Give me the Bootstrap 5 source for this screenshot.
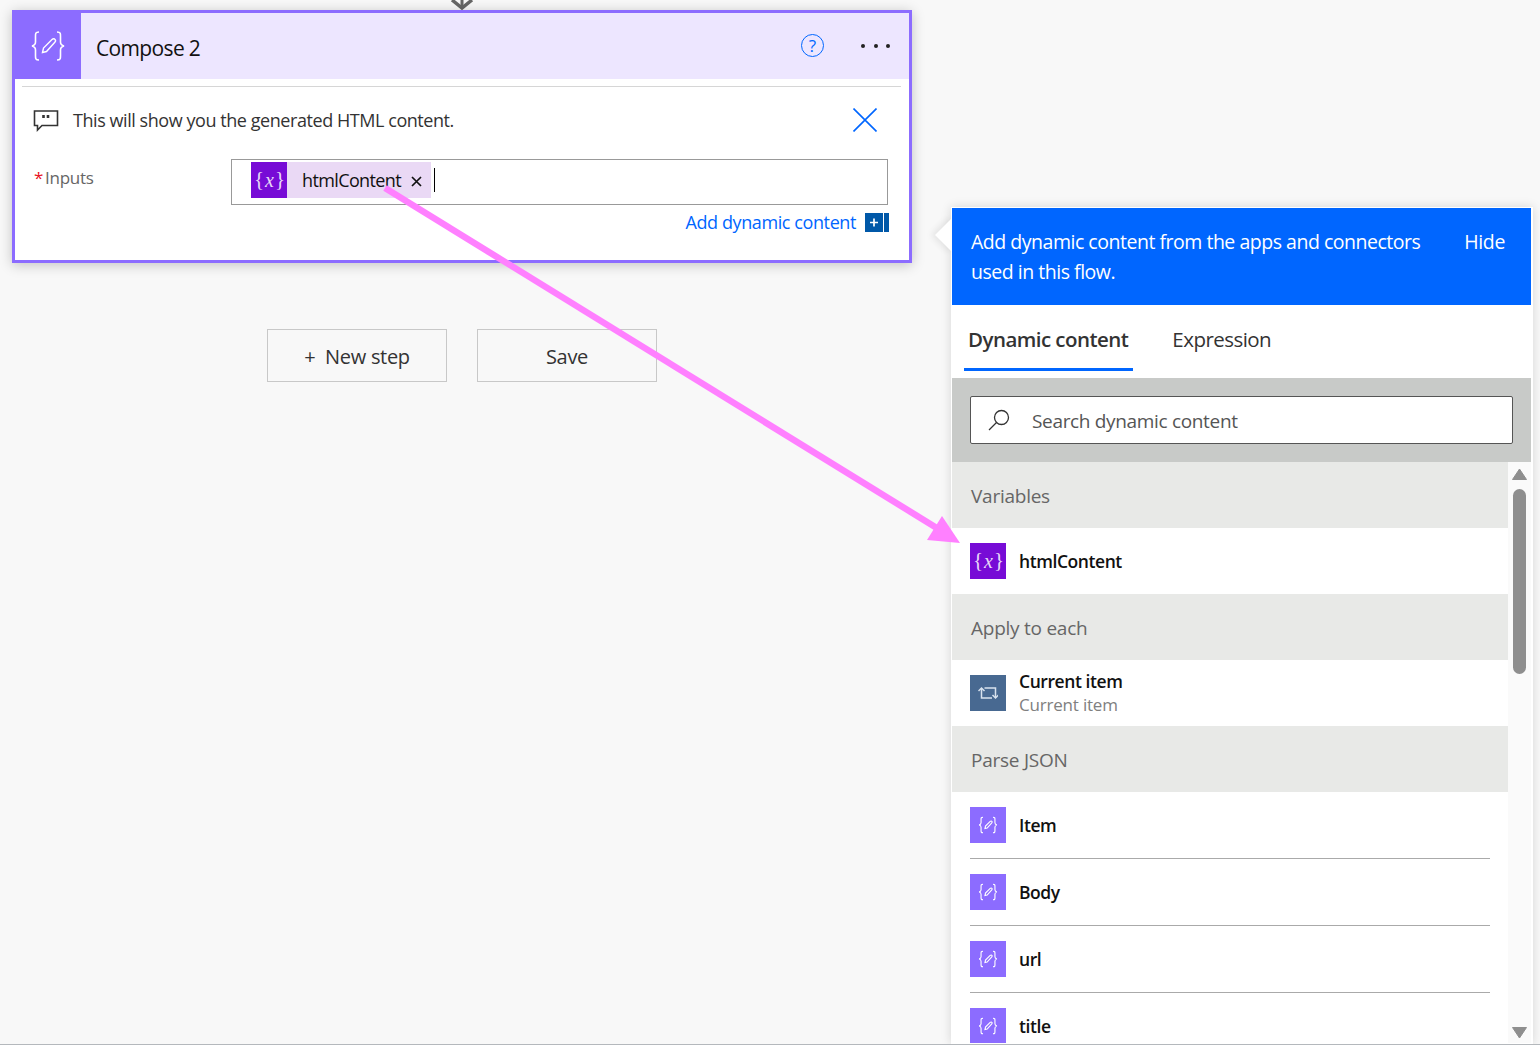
<!DOCTYPE html>
<html lang="en"><head><meta charset="utf-8"><title>Compose 2</title>
<link href="https://cdn.jsdelivr.net/npm/bootstrap@5.3.0/dist/css/bootstrap.min.css" rel="stylesheet">
<style>
html,body{height:1045px;overflow:hidden}
body{font-family:"Open Sans","Liberation Sans",sans-serif;background:#f8f8f8;color:#222;border-bottom:1px solid #b4b8bc;position:relative;font-size:18px;letter-spacing:-.44px}
.flow-col{width:951px;flex:none}
.connector{height:10px;width:924px}
.connector svg{display:block}
.action{width:900px;height:253px;margin-left:12px;border:3px solid #8c6cff;border-radius:0;box-shadow:0 2px 12px rgba(0,0,0,.22);background:#fff}
.action-head{height:66px;background:#ede6ff}
.action-icon{width:66px;height:66px;background:#8c6cff;flex:none}
.action-title{font-size:21px;margin-left:15px;padding-top:5px;color:#111;letter-spacing:-.65px}
.help{width:23px;height:23px;margin-right:37px;margin-bottom:2px;border:1.5px solid #0066ff;border-radius:50%;color:#0066ff;font-size:17px;line-height:1;letter-spacing:0}
.dots{gap:8.500px;margin-right:19px}
.dots i{display:block;width:4px;height:4px;border-radius:50%;background:#222}
.rule{height:1px;margin:7px 8px 0 7px;background:#d6d6d6}
.comment{padding:15px 32px 0 18px;height:72px}
.comment-text{margin-left:14px;padding-top:6px;line-height:24px;color:#333}
.comment svg.c{margin-top:6px;flex:none}
.close-x{margin-top:6px}
.field{padding-left:19px;padding-right:21px}
.field-label{width:197px;padding-top:6px;color:#666;font-size:17px;letter-spacing:-.3px}
.field-label b{color:#e81123;font-weight:400;margin-right:2px}
.token-box{height:46px;width:657px;padding:2px 0 0 19px;border:1px solid #999;border-radius:0;background:#fff}
.chip{height:36px;width:180px;background:#ead9f5;color:#111}
.chip-icon,.var-icon{background:#770bd6;color:#e8d8f8;width:36px;height:36px;font-family:"Liberation Serif",serif;font-size:21px;letter-spacing:-1px;flex:none}
.chip-icon em,.var-icon em{margin:0 2px;font-size:20px}
.chip-name{margin-left:15px;font-size:18px;letter-spacing:-.62px}
.chip-x{margin-left:10px;margin-top:3px}
.caret-bar{display:block;width:1px;height:24px;background:#000;margin:6px 0 0 3px}
.add-link{color:#0066ff;text-decoration:none;font-size:18px;line-height:22px;padding:6px 20px 0 0;letter-spacing:-.4px}
.add-link svg{margin-left:9px}
.steps{margin-top:66px;margin-left:267px;gap:30px}
.steps .btn{width:180px;height:53px;border:1px solid #c8c8c8;border-radius:0;background:#f8f8f8;color:#333;font-size:20px;letter-spacing:-.3px;padding:2px 0 0}
.panel{width:582px;height:837px;margin-top:207px;border:1px solid #fff;border-right-width:2px;border-radius:0;background:#fff;box-shadow:0 0 10px rgba(0,0,0,.14);position:relative;flex:none}
.pointer{position:absolute;left:-12px;top:15px;width:24px;height:24px;background:#fff;transform:rotate(45deg);box-shadow:-3px 3px 6px rgba(0,0,0,.08)}
.panel-head{height:97px;padding:19px 26px 0 19px;background:#0066ff;color:#fff;position:relative;font-size:19.500px;line-height:30px;letter-spacing:-.48px}
.panel-head p{width:470px;margin:0}
.panel-head a{color:#fff;text-decoration:none;letter-spacing:-.38px}
.tabs{height:73px;padding-left:12px;gap:35px;border:0}
.tabs .nav-link{height:66px;padding:19px 5px 0 4px;border:0;border-radius:0;margin:0;background:none;color:#333;font-size:20.500px;letter-spacing:-.54px;border-bottom:3px solid transparent}
.tabs .nav-link.active{font-weight:600;color:#333;background:none;border-bottom:3px solid #0066ff}
.search{height:84px;padding:18px 18px 0;background:#c8cac8}
.search-box{height:48px;border:1px solid #555;border-radius:2px;background:#fff;padding-left:17px;gap:22px;color:#555;font-size:19px;letter-spacing:-.33px}
.search-box span{padding-top:2px}
.results{height:582px;overflow:hidden}
.results-list{width:556px;flex:none}
.group{height:66px;padding:4px 0 0 19px;background:#e8e9e7;color:#666;font-size:19px;letter-spacing:-.25px}
.entry{height:66px;padding:0 0 0 18px;border:0;border-radius:0;background:#fff;gap:13px}
.entry-name{font-size:17.500px;font-weight:600;color:#111;line-height:24px;letter-spacing:-.43px}
.entry-sub{font-size:17px;color:#808080;line-height:24px;letter-spacing:-.2px}
.list-row{height:67px;padding-left:18px;background:#fff}
.list-row>div{height:67px;width:520px;border-bottom:1px solid #aaa;gap:13px}
.param-icon{width:36px;height:36px;background:#8c6cff;flex:none}
.repeat-icon{width:36px;height:36px;background:#486991;flex:none}
.scroll-track{width:24px;background:#fafafa;padding-top:6px;padding-left:4px}
.scroll-thumb{width:13px;height:185px;margin:9px 0 0 1px;background:#8e8e8e;border-radius:7px}
.scroll-down{margin-top:auto;margin-bottom:4px}
.arrow{position:absolute;left:0;top:0;pointer-events:none}
</style></head>
<body>
<main class="d-flex">
<section class="flow-col">
  <div class="connector d-flex justify-content-center">
    <svg width="24" height="10" viewBox="0 0 24 10"><path d="M2 0 L12 8 L22 0" fill="none" stroke="#666" stroke-width="3.5"/><path d="M12 0V7" stroke="#666" stroke-width="3"/></svg>
  </div>
  <div class="card action">
    <div class="action-head d-flex align-items-center">
      <div class="action-icon d-flex align-items-center justify-content-center">
        <svg width="36" height="32" viewBox="0 0 36 32" fill="none" stroke="#fff" stroke-width="1.6"><path d="M9 2C5 2 5.500 4 5.500 8V12C5.500 14.500 4 15.500 2 16C4 16.500 5.500 17.500 5.500 20V24C5.500 28 5 30 9 30"/><path d="M27 2C31 2 30.500 4 30.500 8V12C30.500 14.500 32 15.500 34 16C32 16.500 30.500 17.500 30.500 20V24C30.500 28 31 30 27 30"/><path d="M12.500 22.500L13.500 18L22 9.500C23 8.500 24.500 8.500 25 9.500C25.800 10.300 25.500 11.500 24.800 12.200L16.500 21.500Z" stroke-width="1.4"/></svg>
      </div>
      <div class="action-title flex-grow-1">Compose 2</div>
      <span class="help d-flex align-items-center justify-content-center">?</span>
      <span class="dots d-flex"><i></i><i></i><i></i></span>
    </div>
    <div class="rule"></div>
    <div class="comment d-flex align-items-start">
      <svg class="c" width="26" height="24" viewBox="0 0 26 24" fill="none" stroke="#333" stroke-width="1.6"><path d="M1.500 3H24.500V17.500H9L4.500 22V17.500H1.500Z"/><path d="M10.500 7V10M15 7V10" stroke-width="2.600"/></svg>
      <div class="comment-text flex-grow-1">This will show you the generated HTML content.</div>
      <svg class="close-x" width="24" height="24" viewBox="0 0 24 24" stroke="#0066ff" stroke-width="1.6"><path d="M.5 .5L23.500 23.500M23.500 .5L.5 23.500"/></svg>
    </div>
    <div class="field d-flex">
      <label class="field-label"><b>*</b>Inputs</label>
      <div class="form-control token-box d-flex">
        <span class="chip d-flex align-items-center">
          <span class="chip-icon d-flex align-items-center justify-content-center">{<em>x</em>}</span>
          <span class="chip-name">htmlContent</span>
          <svg class="chip-x" width="11" height="11" viewBox="0 0 11 11" stroke="#111" stroke-width="1.7"><path d="M1 1L10 10M10 1L1 10"/></svg>
        </span>
        <span class="caret-bar"></span>
      </div>
    </div>
    <div class="d-flex justify-content-end">
      <a class="add-link d-flex align-items-center" href="#">Add dynamic content<svg width="24" height="19" viewBox="0 0 24 19"><rect width="18" height="19" fill="#0058a8"/><rect x="19" width="5" height="19" fill="#0058a8"/><path d="M5 9.500H13M9 5.500V13.500" stroke="#fff" stroke-width="1.700"/></svg></a>
    </div>
  </div>
  <div class="steps d-flex">
    <button class="btn" type="button">+&nbsp; New step</button>
    <button class="btn" type="button">Save</button>
  </div>
</section>
<aside class="card panel">
  <span class="pointer"></span>
  <div class="panel-head d-flex justify-content-between">
    <p>Add dynamic content from the apps and connectors used in this flow.</p>
    <a href="#">Hide</a>
  </div>
  <ul class="nav nav-tabs tabs">
    <li class="nav-item"><a class="nav-link active" href="#">Dynamic content</a></li>
    <li class="nav-item"><a class="nav-link" href="#">Expression</a></li>
  </ul>
  <div class="search">
    <div class="search-box d-flex align-items-center">
      <svg width="22" height="22" viewBox="0 0 22 22" fill="none" stroke="#333" stroke-width="1.300"><circle cx="13.500" cy="8.500" r="7"/><path d="M8.500 13.500L1 21"/></svg>
      <span>Search dynamic content</span>
    </div>
  </div>
  <div class="results d-flex">
    <div class="results-list">
      <div class="group d-flex align-items-center">Variables</div>
      <div class="list-group-item entry d-flex align-items-center">
        <span class="var-icon d-flex align-items-center justify-content-center">{<em>x</em>}</span>
        <span class="entry-name">htmlContent</span>
      </div>
      <div class="group d-flex align-items-center">Apply to each</div>
      <div class="list-group-item entry d-flex align-items-center">
        <span class="repeat-icon d-flex align-items-center justify-content-center">
          <svg width="20" height="16" viewBox="0 0 20 16" fill="none" stroke="#d8e2ee" stroke-width="1.500"><path d="M3.500 4V13H14M6.500 3H17.500V12"/><path d="M.5 6L3.500 3L6.500 6M14.500 10L17.500 13L20.500 10"/></svg>
        </span>
        <div><div class="entry-name">Current item</div><div class="entry-sub">Current item</div></div>
      </div>
      <div class="group d-flex align-items-center">Parse JSON</div>
      <div class="list-row"><div class="d-flex align-items-center"><span class="param-icon d-flex align-items-center justify-content-center"><svg width="20" height="20" viewBox="0 0 36 32" fill="none" stroke="#fff" stroke-width="2"><path d="M9 2C5 2 5.500 4 5.500 8V12C5.500 14.500 4 15.500 2 16C4 16.500 5.500 17.500 5.500 20V24C5.500 28 5 30 9 30"/><path d="M27 2C31 2 30.500 4 30.500 8V12C30.500 14.500 32 15.500 34 16C32 16.500 30.500 17.500 30.500 20V24C30.500 28 31 30 27 30"/><path d="M12.500 22.500L13.500 18L22 9.500C23 8.500 24.500 8.500 25 9.500C25.800 10.300 25.500 11.500 24.800 12.200L16.500 21.500Z"/></svg></span><span class="entry-name">Item</span></div></div>
      <div class="list-row"><div class="d-flex align-items-center"><span class="param-icon d-flex align-items-center justify-content-center"><svg width="20" height="20" viewBox="0 0 36 32" fill="none" stroke="#fff" stroke-width="2"><path d="M9 2C5 2 5.500 4 5.500 8V12C5.500 14.500 4 15.500 2 16C4 16.500 5.500 17.500 5.500 20V24C5.500 28 5 30 9 30"/><path d="M27 2C31 2 30.500 4 30.500 8V12C30.500 14.500 32 15.500 34 16C32 16.500 30.500 17.500 30.500 20V24C30.500 28 31 30 27 30"/><path d="M12.500 22.500L13.500 18L22 9.500C23 8.500 24.500 8.500 25 9.500C25.800 10.300 25.500 11.500 24.800 12.200L16.500 21.500Z"/></svg></span><span class="entry-name">Body</span></div></div>
      <div class="list-row"><div class="d-flex align-items-center"><span class="param-icon d-flex align-items-center justify-content-center"><svg width="20" height="20" viewBox="0 0 36 32" fill="none" stroke="#fff" stroke-width="2"><path d="M9 2C5 2 5.500 4 5.500 8V12C5.500 14.500 4 15.500 2 16C4 16.500 5.500 17.500 5.500 20V24C5.500 28 5 30 9 30"/><path d="M27 2C31 2 30.500 4 30.500 8V12C30.500 14.500 32 15.500 34 16C32 16.500 30.500 17.500 30.500 20V24C30.500 28 31 30 27 30"/><path d="M12.500 22.500L13.500 18L22 9.500C23 8.500 24.500 8.500 25 9.500C25.800 10.300 25.500 11.500 24.800 12.200L16.500 21.500Z"/></svg></span><span class="entry-name">url</span></div></div>
      <div class="list-row"><div class="d-flex align-items-center"><span class="param-icon d-flex align-items-center justify-content-center"><svg width="20" height="20" viewBox="0 0 36 32" fill="none" stroke="#fff" stroke-width="2"><path d="M9 2C5 2 5.500 4 5.500 8V12C5.500 14.500 4 15.500 2 16C4 16.500 5.500 17.500 5.500 20V24C5.500 28 5 30 9 30"/><path d="M27 2C31 2 30.500 4 30.500 8V12C30.500 14.500 32 15.500 34 16C32 16.500 30.500 17.500 30.500 20V24C30.500 28 31 30 27 30"/><path d="M12.500 22.500L13.500 18L22 9.500C23 8.500 24.500 8.500 25 9.500C25.800 10.300 25.500 11.500 24.800 12.200L16.500 21.500Z"/></svg></span><span class="entry-name">title</span></div></div>
    </div>
    <div class="scroll-track d-flex flex-column">
      <svg width="15" height="12" viewBox="0 0 15 12"><path d="M7.500 1L14.500 11.500H.5Z" fill="#8e8e8e" stroke="#8e8e8e" stroke-linejoin="round"/></svg>
      <div class="scroll-thumb"></div>
      <svg class="scroll-down" width="15" height="12" viewBox="0 0 15 12"><path d="M7.500 11L14.500 .5H.5Z" fill="#8e8e8e" stroke="#8e8e8e" stroke-linejoin="round"/></svg>
    </div>
  </div>
</aside>
</main>
<svg class="arrow" width="1540" height="1045" viewBox="0 0 1540 1045"><path d="M385 188L940 530" stroke="#ff80ff" stroke-width="6.500" fill="none"/><path d="M960 543L927 540L942 516Z" fill="#ff80ff"/></svg>
</body></html>
